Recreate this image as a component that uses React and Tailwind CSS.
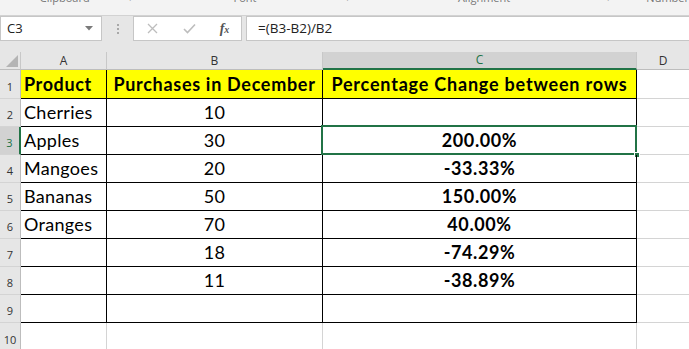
import React from "react";

const rows = [
  { n: 1, a: "Product", b: "Purchases in December", c: "Percentage Change between rows", header: true },
  { n: 2, a: "Cherries", b: "10", c: "" },
  { n: 3, a: "Apples", b: "30", c: "200.00%", sel: true },
  { n: 4, a: "Mangoes", b: "20", c: "-33.33%" },
  { n: 5, a: "Bananas", b: "50", c: "150.00%" },
  { n: 6, a: "Oranges", b: "70", c: "40.00%" },
  { n: 7, a: "", b: "18", c: "-74.29%" },
  { n: 8, a: "", b: "11", c: "-38.89%" },
  { n: 9, a: "", b: "", c: "" },
];

const cellFont = { fontFamily: "Lato, 'Open Sans', sans-serif" };

export default function App() {
  return (
    <div className="w-[689px] h-[349px] overflow-hidden bg-white" style={{ fontFamily: "'Open Sans', 'Noto Sans', sans-serif" }}>
      {/* ribbon strip (group labels clipped) */}
      <div className="h-[16px] bg-[#f3f3f3] border-b border-[#d2d2d2] flex overflow-hidden text-[11px] leading-[11px] text-[#777]">
        <div className="w-[131px] flex justify-center -mt-[8px]">Clipboard</div>
        <div className="w-[14px] -mt-[8px] text-[#aaa]">⌐</div>
        <div className="w-[206px] flex justify-center -mt-[8px]">Font</div>
        <div className="w-[14px] -mt-[8px] text-[#aaa]">⌐</div>
        <div className="w-[250px] flex justify-center -mt-[8px]">Alignment</div>
        <div className="w-[14px] -mt-[8px] text-[#aaa]">⌐</div>
        <div className="flex-1 pl-[25px] -mt-[8px]">Number</div>
      </div>
      {/* formula bar */}
      <div className="h-[36px] bg-[#e6e6e6] flex items-start">
        <div className="w-[102px] h-[25px] bg-white border border-[#c6c6c6] flex items-center justify-between pl-[6px] pr-[8px] text-[13px] text-[#222]">
          <span>C3</span>
          <svg width="8" height="5" viewBox="0 0 8 5"><path d="M0 0 H8 L4 4.5 Z" fill="#7a7a7a" /></svg>
        </div>
        <div className="w-[31px] h-[25px] flex flex-col items-center justify-center gap-[2px]">
          <div className="w-[2px] h-[2px] bg-[#a8a8a8]" />
          <div className="w-[2px] h-[2px] bg-[#a8a8a8]" />
          <div className="w-[2px] h-[2px] bg-[#a8a8a8]" />
        </div>
        <div className="w-[109px] h-[25px] bg-white border border-[#c6c6c6] flex items-center">
          <div className="w-[37px] flex justify-center">
            <svg width="11" height="11" viewBox="0 0 11 11"><path d="M1 1 L10 10 M10 1 L1 10" stroke="#bdbdbd" strokeWidth="1.3" /></svg>
          </div>
          <div className="w-[37px] flex justify-center">
            <svg width="13" height="11" viewBox="0 0 13 11"><path d="M1 6 L4.5 9.5 L12 1.5" stroke="#bdbdbd" strokeWidth="1.6" fill="none" /></svg>
          </div>
          <div className="w-[33px] flex justify-center items-baseline italic text-[#555] leading-none" style={{ fontFamily: "'Liberation Serif', serif" }}>
            <span className="font-bold text-[14px]">f</span><span className="text-[10px] font-bold">x</span>
          </div>
        </div>
        <div className="ml-[4px] flex-1 h-[25px] bg-white border border-[#c6c6c6] border-r-0 flex items-center pl-[11px] text-[13.5px] text-[#222]">
          =(B3-B2)/B2
        </div>
      </div>
      {/* column headers */}
      <div className="flex h-[18px] bg-[#e6e6e6] text-[12px] text-[#333]">
        <div className="w-[21px] border-r border-[#c8c8c8] border-b border-b-[#bdbdbd] relative">
          <svg className="absolute right-[2px] bottom-[2px]" width="12" height="12" viewBox="0 0 12 12"><path d="M12 0 V12 H0 Z" fill="#b4b4b4" /></svg>
        </div>
        <div className="w-[86px] border-r border-[#c8c8c8] border-b border-b-[#bdbdbd] flex items-center justify-center">A</div>
        <div className="w-[216px] border-r border-[#c8c8c8] border-b border-b-[#bdbdbd] flex items-center justify-center">B</div>
        <div className="w-[314px] bg-[#d2d2d2] border-r border-[#c8c8c8] border-b-2 border-b-[#217346] flex items-center justify-center text-[#217346]">C</div>
        <div className="flex-1 border-b border-[#bdbdbd] flex items-center justify-center">D</div>
      </div>
      {/* rows */}
      {rows.map((r) => (
        <div key={r.n} className={`flex ${r.n === 1 ? "h-[29px]" : "h-[28px]"}`}>
          <div className={`w-[21px] flex items-end justify-center pb-[3px] text-[11px] border-b border-[#d4d4d4] ${r.sel ? "bg-[#d2d2d2] text-[#217346] border-r-2 border-r-[#217346]" : "bg-[#e6e6e6] text-[#333] border-r border-r-[#bdbdbd]"}`}>
            {r.n}
          </div>
          <div className={`w-[86px] border-r border-b border-black flex items-center pl-[3px] text-[18px] text-black whitespace-nowrap overflow-hidden ${r.header ? "bg-[#ffff00] font-bold tracking-[0.6px]" : "tracking-[0.3px]"}`} style={cellFont}>
            {r.a}
          </div>
          <div className={`w-[216px] border-r border-b border-black flex items-center justify-center text-[18px] text-black whitespace-nowrap ${r.header ? "bg-[#ffff00] font-bold tracking-[0.7px]" : "tracking-[0.3px]"}`} style={cellFont}>
            {r.b}
          </div>
          <div className={`w-[314px] border-r border-b border-black flex items-center justify-center text-[18px] font-bold tracking-[0.6px] text-black relative whitespace-nowrap ${r.header ? "bg-[#ffff00] tracking-[0.8px]" : ""}`} style={cellFont}>
            {r.c}
            {r.sel && (
              <>
                <div className="absolute -left-[2px] -top-[2px] -right-[1px] -bottom-[1px] border-2 border-[#217346]" />
                <div className="absolute -right-[4px] -bottom-[4px] w-[6px] h-[6px] bg-[#217346] border border-white" />
              </>
            )}
          </div>
          <div className="flex-1 border-b border-[#d4d4d4]" />
        </div>
      ))}
      <div className="flex h-[28px]">
        <div className="w-[21px] flex items-end justify-center pb-[3px] text-[11px] bg-[#e6e6e6] text-[#333] border-r border-[#bdbdbd]">10</div>
        <div className="w-[86px] border-r border-[#d4d4d4]" />
        <div className="w-[216px] border-r border-[#d4d4d4]" />
        <div className="w-[314px] border-r border-[#d4d4d4]" />
        <div className="flex-1" />
      </div>
    </div>
  );
}
